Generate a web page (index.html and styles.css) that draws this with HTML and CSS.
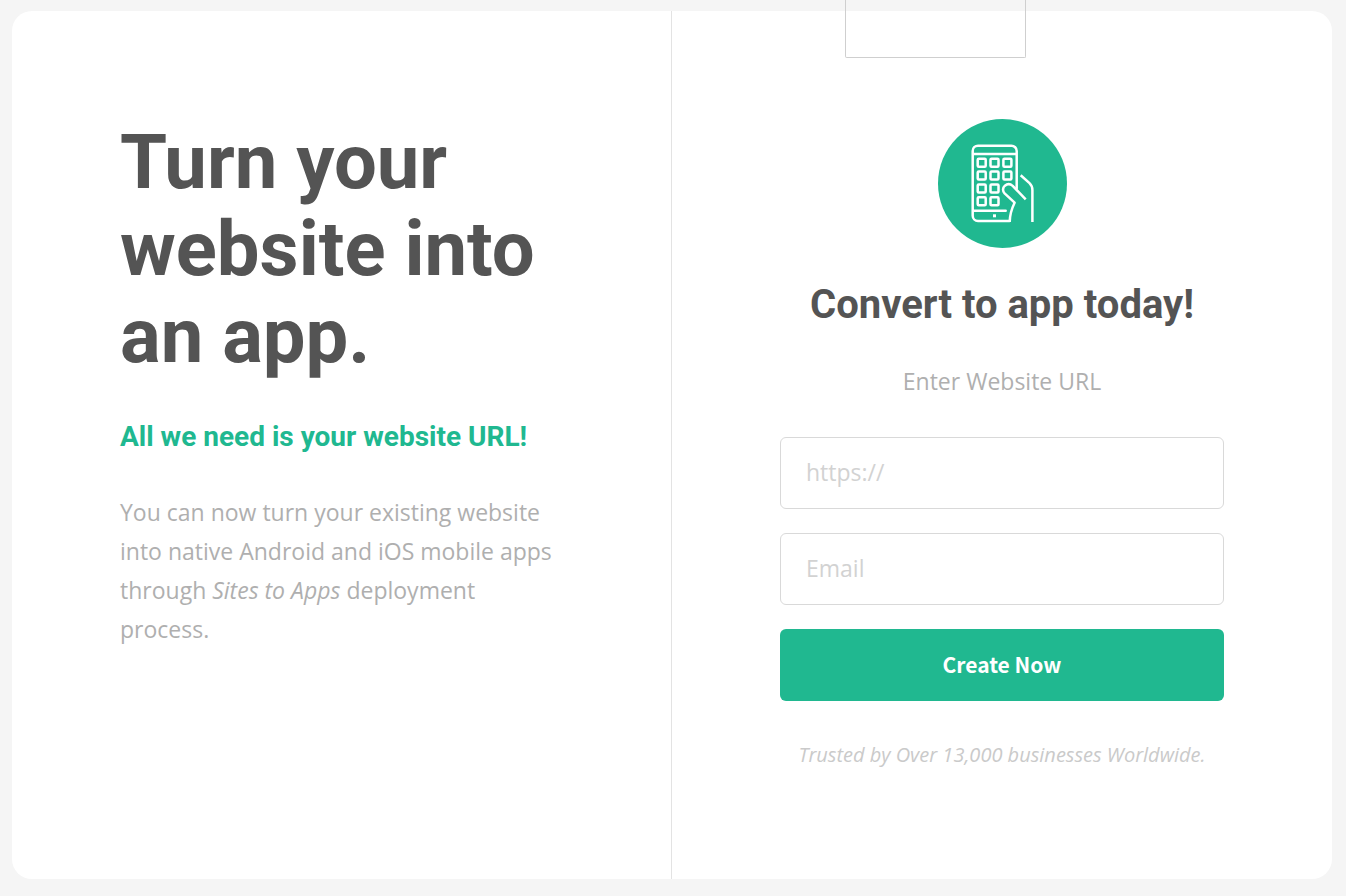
FILE: index.html
```
<!DOCTYPE html>
<html lang="en">
<head>
<meta charset="utf-8">
<meta name="viewport" content="width=device-width, initial-scale=1">
<title>Sites to Apps</title>
<link rel="stylesheet" href="styles.css">
</head>
<body>
<main class="card">
  <section class="intro">
    <h1 class="headline">Turn your website into an app.</h1>
    <h2 class="tagline">All we need is your website URL!</h2>
    <p class="copy">You can now turn your existing website into native Android and iOS mobile apps through <em>Sites to Apps</em> deployment process.</p>
  </section>
  <section class="signup">
    <svg class="badge" viewBox="0 0 129 129" aria-hidden="true">
      <circle cx="64.500" cy="64.500" r="64.500" fill="#20b890"/>
      <g fill="none" stroke="#fff" stroke-width="2.500" stroke-linecap="round" stroke-linejoin="round">
        <path d="M71.500 102H40a5.300 5.300 0 0 1-5.300-5.300V32a5.300 5.300 0 0 1 5.300-5.300h33.400a5.300 5.300 0 0 1 5.300 5.300v37.500M34.700 35h44M34.700 91.700h33"/>
        <path stroke-linecap="butt" d="M71.700 103c.1-8 1.300-12 4.900-19.300l-10-9.300c-2.300-2.400-1.900-5.700.3-7.700 2.400-2 5.500-1.800 7.800.2L87.700 80.300"/>
        <path stroke-linecap="butt" d="M82.700 56.300l8.800 7.800c2 1.900 2.900 4 2.900 6.900v32"/>
        <g>
          <rect x="39.700" y="39.700" width="8" height="8" rx="1"/><rect x="52.500" y="39.700" width="8" height="8" rx="1"/><rect x="65.400" y="39.700" width="8" height="8" rx="1"/>
          <rect x="39.700" y="52.500" width="8" height="8" rx="1"/><rect x="52.500" y="52.500" width="8" height="8" rx="1"/><rect x="65.400" y="52.500" width="8" height="8" rx="1"/>
          <rect x="39.700" y="65.400" width="8" height="8" rx="1"/><rect x="52.500" y="65.400" width="8" height="8" rx="1"/>
          <rect x="39.700" y="78.300" width="8" height="8" rx="1"/><rect x="52.500" y="78.300" width="8" height="8" rx="1"/>
        </g>
      </g>
      <rect x="55" y="95.300" width="3" height="3" fill="#fff"/>
    </svg>
    <h2 class="title">Convert to app today!</h2>
    <form class="form">
      <label class="label" for="url">Enter Website URL</label>
      <input class="field" id="url" type="url" placeholder="https://">
      <input class="field" id="email" type="email" placeholder="Email" aria-label="Email">
      <button class="submit" type="submit">Create Now</button>
    </form>
    <p class="trust">Trusted by Over 13,000 businesses Worldwide.</p>
    <div class="tab"></div>
  </section>
</main>
</body>
</html>
```
FILE: styles.css
```
* { box-sizing: border-box; }
body {
  margin: 0;
  min-height: 100vh;
  padding: 11px 14px 17px 12px;
  display: flex;
  background: #f5f5f5;
  color: #afafaf;
  font-family: "Open Sans", sans-serif;
  font-size: 23px;
}
.card {
  flex: 1;
  display: grid;
  grid-template-columns: 1fr 1fr;
  background: #fff;
  border-radius: 20px;
}
.intro {
  padding: 108px 84px 96px 108px;
  border-right: 1px solid #e3e3e3;
}
.headline, .tagline, .title {
  margin: 0;
  font-family: Roboto, sans-serif;
  font-weight: 700;
}
.headline {
  font-size: 76px;
  line-height: 87px;
  color: #545454;
}
.tagline {
  margin-top: 36px;
  font-size: 28px;
  line-height: 42px;
  color: #20b890;
}
.copy {
  margin: 35px 0 0;
  max-width: 444px;
  line-height: 39px;
}
.signup {
  padding: 108px 108px 96px;
  display: flex;
  flex-direction: column;
}
.badge {
  width: 129px;
  height: 129px;
  align-self: center;
}
.title {
  margin-top: 32px;
  font-size: 40px;
  line-height: 50px;
  text-align: center;
  white-space: nowrap;
  color: #545454;
}
.form {
  margin-top: 32px;
  display: flex;
  flex-direction: column;
  gap: 24px;
}
.label {
  line-height: 39px;
  margin-bottom: 12px;
  text-align: center;
}
.field {
  width: 100%;
  height: 72px;
  padding: 0 25px 2px;
  border: 1px solid #d9d9d9;
  border-radius: 6px;
  background: #fff;
  color: #545454;
  font: inherit;
}
.field::placeholder { color: #d2d2d2; opacity: 1; }
.submit {
  height: 72px;
  padding: 0 0 2px;
  border: 0;
  border-radius: 6px;
  background: #20b890;
  color: #fff;
  font-family: "Noto Sans CJK SC", sans-serif;
  font-size: 21px;
  font-weight: 700;
}
.trust {
  margin: 36px 0 0;
  font-size: 20px;
  line-height: 35px;
  font-style: italic;
  text-align: center;
  white-space: nowrap;
  color: #cacaca;
}
.tab {
  position: absolute;
  top: 0;
  left: 845px;
  width: 181px;
  height: 58px;
  border: 1px solid #cfcfcf;
  border-top: 0;
  border-radius: 0 0 2px 2px;
}
```
